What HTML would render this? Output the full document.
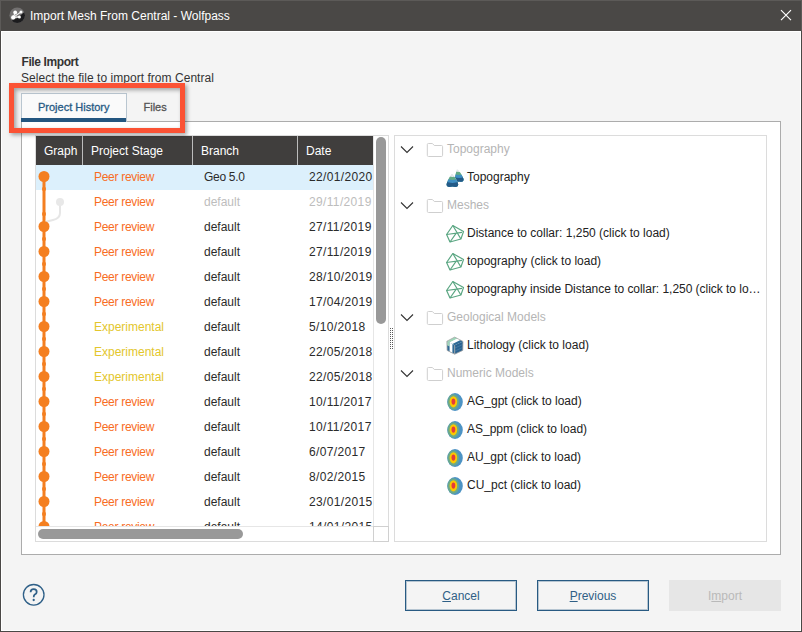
<!DOCTYPE html>
<html><head><meta charset="utf-8">
<style>
*{margin:0;padding:0;box-sizing:border-box}
html,body{width:802px;height:632px;overflow:hidden;background:#4a4846}
body{font-family:"Liberation Sans",sans-serif;font-size:12px;position:relative}
.a{position:absolute}
.t{position:absolute;white-space:nowrap;line-height:14px}
#title{left:0;top:0;width:802px;height:31px;background:#4a4846;border:1px solid #5c5a58;border-bottom:none}
#content{left:1px;top:31px;width:800px;height:600px;background:#f4f4f4;border:1px solid #fff}
.ps{color:#f86d1f;letter-spacing:-0.3px}
.ex{color:#e3c62c}
.df{color:#2b2b2b}
.fd{color:#bdbdbd}
.btn{position:absolute;top:580px;width:112px;height:31px;border:1px solid #285a82;box-shadow:inset 0 0 0 1px rgba(40,90,130,0.3);color:#2f5f86;text-align:center;line-height:30px;font-size:12px}
.tr{position:absolute;white-space:nowrap;line-height:14px;color:#222}
.tg{color:#b5b5b5}
</style></head>
<body>
<div id="title" class="a">
  <svg class="a" style="left:8px;top:6px" width="17" height="17" viewBox="0 0 17 17">
    <defs><clipPath id="ic"><circle cx="8.2" cy="8.15" r="7.75"/></clipPath></defs>
    <circle cx="8.2" cy="8.15" r="7.75" fill="#737171"/>
    <path clip-path="url(#ic)" d="M1 14.5 C 4 12.5, 8 12, 10.5 9.5 C 12.5 7.5, 14 6, 17 4 L17 17 L1 17 Z" fill="#1c1c1e"/>
    <g stroke="#f2f2f2" stroke-width="1.1"><line x1="4.2" y1="10.4" x2="12" y2="5"/><line x1="4.2" y1="10.4" x2="10.4" y2="9.9"/><line x1="4.2" y1="10.4" x2="6.2" y2="5.5"/></g>
    <circle cx="4.2" cy="10.4" r="2.1" fill="#fff"/>
    <circle cx="6.2" cy="5.5" r="1.9" fill="#fff"/>
    <circle cx="12" cy="5" r="1.5" fill="#fff"/>
    <circle cx="10.4" cy="9.9" r="1.5" fill="#fff"/>
  </svg>
  <div class="t" style="left:29px;top:7.5px;color:#fff;font-size:12px">Import Mesh From Central - Wolfpass</div>
  <svg class="a" style="left:779px;top:8px" width="13" height="13" viewBox="0 0 13 13">
    <path d="M1 1.1 L11 11.1 M11 1.1 L1 11.1" stroke="#fff" stroke-width="1.15"/>
  </svg>
</div>
<div id="content" class="a"></div>

<div class="t" style="left:21.5px;top:55px;font-weight:bold;color:#333;letter-spacing:-0.4px">File Import</div>
<div class="t" style="left:21px;top:70.5px;color:#333;letter-spacing:0.04px">Select the file to import from Central</div>

<!-- tab panel -->
<div class="a" style="left:21px;top:121px;width:760px;height:434px;border:1px solid #acacac;background:#fff"></div>
<!-- tabs -->
<div class="a" style="left:21px;top:93px;width:106px;height:29px;background:#fafafa;border:1px solid #b9c6d0;border-bottom:none"></div>
<div class="a" style="left:21px;top:118px;width:105px;height:4px;background:#235680"></div>
<div class="t" style="left:38px;top:100px;color:#275a84;font-size:11px;-webkit-text-stroke:0.3px #275a84">Project History</div>
<div class="t" style="left:143.5px;top:100px;color:#555;font-size:11px;-webkit-text-stroke:0.3px #555;letter-spacing:0px">Files</div>

<!-- left table -->
<div class="a" style="left:35px;top:135px;width:354px;height:407px;border:1px solid #dcdcdc;background:#fff"></div>
<div class="a" style="left:36px;top:136px;width:337px;height:29px;background:#403e3d"></div>
<div class="a" style="left:82px;top:136px;width:1px;height:29px;background:#bcbcbc"></div>
<div class="a" style="left:192px;top:136px;width:1px;height:29px;background:#bcbcbc"></div>
<div class="a" style="left:297px;top:136px;width:1px;height:29px;background:#bcbcbc"></div>
<div class="t" style="left:44px;top:144px;color:#fff">Graph</div>
<div class="t" style="left:91px;top:144px;color:#fff">Project Stage</div>
<div class="t" style="left:201px;top:144px;color:#fff">Branch</div>
<div class="t" style="left:306px;top:144px;color:#fff">Date</div>

<div class="a" style="left:36px;top:165px;width:337px;height:361px;overflow:hidden">
  <div class="a" style="left:0;top:0;width:337px;height:25px;background:#dcf0fc"></div>
<svg class="a" style="left:0;top:0" width="40" height="361" viewBox="0 0 40 361">
<line x1="8" y1="11" x2="8" y2="361" stroke="#f47f20" stroke-width="3"/>
<path d="M24 37 L24 48 Q24 53.5 17 55 L9 57" fill="none" stroke="#e6e6e6" stroke-width="2"/>
<ellipse cx="8" cy="24" rx="2" ry="2.2" fill="#f47f20"/>
<ellipse cx="8" cy="49" rx="2" ry="2.2" fill="#f47f20"/>
<ellipse cx="8" cy="74" rx="2" ry="2.2" fill="#f47f20"/>
<ellipse cx="8" cy="99" rx="2" ry="2.2" fill="#f47f20"/>
<ellipse cx="8" cy="124" rx="2" ry="2.2" fill="#f47f20"/>
<ellipse cx="8" cy="149" rx="2" ry="2.2" fill="#f47f20"/>
<ellipse cx="8" cy="174" rx="2" ry="2.2" fill="#f47f20"/>
<ellipse cx="8" cy="199" rx="2" ry="2.2" fill="#f47f20"/>
<ellipse cx="8" cy="224" rx="2" ry="2.2" fill="#f47f20"/>
<ellipse cx="8" cy="249" rx="2" ry="2.2" fill="#f47f20"/>
<ellipse cx="8" cy="274" rx="2" ry="2.2" fill="#f47f20"/>
<ellipse cx="8" cy="299" rx="2" ry="2.2" fill="#f47f20"/>
<ellipse cx="8" cy="324" rx="2" ry="2.2" fill="#f47f20"/>
<ellipse cx="8" cy="349" rx="2" ry="2.2" fill="#f47f20"/>
<ellipse cx="8" cy="374" rx="2" ry="2.2" fill="#f47f20"/>
<circle cx="24" cy="37" r="4" fill="#e8e8e8"/>
<circle cx="8" cy="11.5" r="5.5" fill="#f47f20"/>
<circle cx="8" cy="61.5" r="5.5" fill="#f47f20"/>
<circle cx="8" cy="86.5" r="5.5" fill="#f47f20"/>
<circle cx="8" cy="111.5" r="5.5" fill="#f47f20"/>
<circle cx="8" cy="136.5" r="5.5" fill="#f47f20"/>
<circle cx="8" cy="161.5" r="5.5" fill="#f47f20"/>
<circle cx="8" cy="186.5" r="5.5" fill="#f47f20"/>
<circle cx="8" cy="211.5" r="5.5" fill="#f47f20"/>
<circle cx="8" cy="236.5" r="5.5" fill="#f47f20"/>
<circle cx="8" cy="261.5" r="5.5" fill="#f47f20"/>
<circle cx="8" cy="286.5" r="5.5" fill="#f47f20"/>
<circle cx="8" cy="311.5" r="5.5" fill="#f47f20"/>
<circle cx="8" cy="336.5" r="5.5" fill="#f47f20"/>
<circle cx="8" cy="361.5" r="5.5" fill="#f47f20"/>
</svg>
<div class="t ps" style="left:58px;top:5px">Peer review</div>
<div class="t df" style="left:168px;top:5px;letter-spacing:-0.3px">Geo 5.0</div>
<div class="t df" style="left:273px;top:5px;letter-spacing:0.35px">22/01/2020</div>
<div class="t ps" style="left:58px;top:30px">Peer review</div>
<div class="t fd" style="left:168px;top:30px">default</div>
<div class="t fd" style="left:273px;top:30px;letter-spacing:0.35px">29/11/2019</div>
<div class="t ps" style="left:58px;top:55px">Peer review</div>
<div class="t df" style="left:168px;top:55px">default</div>
<div class="t df" style="left:273px;top:55px;letter-spacing:0.35px">27/11/2019</div>
<div class="t ps" style="left:58px;top:80px">Peer review</div>
<div class="t df" style="left:168px;top:80px">default</div>
<div class="t df" style="left:273px;top:80px;letter-spacing:0.35px">27/11/2019</div>
<div class="t ps" style="left:58px;top:105px">Peer review</div>
<div class="t df" style="left:168px;top:105px">default</div>
<div class="t df" style="left:273px;top:105px;letter-spacing:0.35px">28/10/2019</div>
<div class="t ps" style="left:58px;top:130px">Peer review</div>
<div class="t df" style="left:168px;top:130px">default</div>
<div class="t df" style="left:273px;top:130px;letter-spacing:0.35px">17/04/2019</div>
<div class="t ex" style="left:58px;top:155px">Experimental</div>
<div class="t df" style="left:168px;top:155px">default</div>
<div class="t df" style="left:273px;top:155px;letter-spacing:0.35px">5/10/2018</div>
<div class="t ex" style="left:58px;top:180px">Experimental</div>
<div class="t df" style="left:168px;top:180px">default</div>
<div class="t df" style="left:273px;top:180px;letter-spacing:0.35px">22/05/2018</div>
<div class="t ex" style="left:58px;top:205px">Experimental</div>
<div class="t df" style="left:168px;top:205px">default</div>
<div class="t df" style="left:273px;top:205px;letter-spacing:0.35px">22/05/2018</div>
<div class="t ps" style="left:58px;top:230px">Peer review</div>
<div class="t df" style="left:168px;top:230px">default</div>
<div class="t df" style="left:273px;top:230px;letter-spacing:0.35px">10/11/2017</div>
<div class="t ps" style="left:58px;top:255px">Peer review</div>
<div class="t df" style="left:168px;top:255px">default</div>
<div class="t df" style="left:273px;top:255px;letter-spacing:0.35px">10/11/2017</div>
<div class="t ps" style="left:58px;top:280px">Peer review</div>
<div class="t df" style="left:168px;top:280px">default</div>
<div class="t df" style="left:273px;top:280px;letter-spacing:0.35px">6/07/2017</div>
<div class="t ps" style="left:58px;top:305px">Peer review</div>
<div class="t df" style="left:168px;top:305px">default</div>
<div class="t df" style="left:273px;top:305px;letter-spacing:0.35px">8/02/2015</div>
<div class="t ps" style="left:58px;top:330px">Peer review</div>
<div class="t df" style="left:168px;top:330px">default</div>
<div class="t df" style="left:273px;top:330px;letter-spacing:0.35px">23/01/2015</div>
<div class="t ps" style="left:58px;top:355px">Peer review</div>
<div class="t df" style="left:168px;top:355px">default</div>
<div class="t df" style="left:273px;top:355px;letter-spacing:0.35px">14/01/2015</div>
</div>
<!-- v scrollbar -->
<div class="a" style="left:373px;top:136px;width:15px;height:390px;background:#fff;border-left:1px solid #e6e6e6"></div>
<div class="a" style="left:376px;top:137px;width:10px;height:187px;background:#999;border-radius:5px"></div>
<!-- h scrollbar -->
<div class="a" style="left:36px;top:526px;width:337px;height:15px;background:#fff;border-top:1px solid #e6e6e6"></div>
<div class="a" style="left:38px;top:529px;width:205px;height:10px;background:#999;border-radius:5px"></div>
<div class="a" style="left:373px;top:526px;width:16px;height:16px;border:1px solid #d0d0d0;background:#fff"></div>

<svg class="a" style="left:389px;top:327px" width="5" height="24" viewBox="0 0 5 24"><g fill="#5a5a5a">
<rect x="1" y="1" width="1" height="1"/><rect x="3" y="1" width="1" height="1"/>
<rect x="1" y="3" width="1" height="1"/><rect x="3" y="3" width="1" height="1"/>
<rect x="1" y="5" width="1" height="1"/><rect x="3" y="5" width="1" height="1"/>
<rect x="1" y="7" width="1" height="1"/><rect x="3" y="7" width="1" height="1"/>
<rect x="1" y="9" width="1" height="1"/><rect x="3" y="9" width="1" height="1"/>
<rect x="1" y="11" width="1" height="1"/><rect x="3" y="11" width="1" height="1"/>
<rect x="1" y="13" width="1" height="1"/><rect x="3" y="13" width="1" height="1"/>
<rect x="1" y="15" width="1" height="1"/><rect x="3" y="15" width="1" height="1"/>
<rect x="1" y="17" width="1" height="1"/><rect x="3" y="17" width="1" height="1"/>
<rect x="1" y="19" width="1" height="1"/><rect x="3" y="19" width="1" height="1"/>
<rect x="1" y="21" width="1" height="1"/><rect x="3" y="21" width="1" height="1"/>
</g></svg>
<!-- right tree panel -->
<div class="a" style="left:394px;top:135px;width:373px;height:407px;border:1px solid #dcdcdc;background:#fff"></div>
<svg class="a" style="left:400px;top:145px" width="14" height="9" viewBox="0 0 14 9"><path d="M1 1.5 L7 7.5 L13 1.5" fill="none" stroke="#333" stroke-width="1.1"/></svg>
<svg class="a" style="left:426px;top:142px" width="18" height="15" viewBox="0 0 18 15"><path d="M1.3 2.6 Q1.3 1.5 2.4 1.5 L6.4 1.5 L8.3 3.5 L15.5 3.5 Q16.6 3.5 16.6 4.6 L16.6 13.3 Q16.6 14.5 15.4 14.5 L2.5 14.5 Q1.3 14.5 1.3 13.3 Z" fill="none" stroke="#cfcfcf" stroke-width="1"/></svg>
<div class="tr tg" style="left:447px;top:142px">Topography</div>
<svg class="a" style="left:440px;top:162px" width="30" height="30" viewBox="0 0 30 30"><clipPath id="c1177"><path d="M16.7 7.4 L17.900000000000002 7.4 Q23.1 14.0 23.6 17.645 Q23.6 20.57 19.1 19.4 Q14.6 20.57 14.6 17.645 Q15.1 14.0 16.7 7.4 Z"/></clipPath><g clip-path="url(#c1177)"><path d="M13.6 30 L24.6 30 L24.6 -6.0 Q19.1 -3.6 13.6 -6.0 Z" fill="#e4e8ea"/><path d="M13.6 30 L24.6 30 L24.6 8.9 Q19.1 11.3 13.6 8.9 Z" fill="#62ab86"/><path d="M13.6 30 L24.6 30 L24.6 11.8 Q19.1 14.200000000000001 13.6 11.8 Z" fill="#3f8fc4"/><path d="M13.6 30 L24.6 30 L24.6 14.8 Q19.1 17.2 13.6 14.8 Z" fill="#245a87"/></g><clipPath id="c2177"><path d="M11.4 12.0 L12.6 12.0 Q17.7 18.93 18.2 22.338 Q18.2 26.108 12.399999999999999 24.6 Q6.6 26.108 6.6 22.338 Q7.1 18.93 11.4 12.0 Z"/></clipPath><g clip-path="url(#c2177)"><path d="M5.6 30 L19.2 30 L19.2 -6.0 Q12.399999999999999 -3.6 5.6 -6.0 Z" fill="#e4e8ea"/><path d="M5.6 30 L19.2 30 L19.2 13.7 Q12.399999999999999 16.099999999999998 5.6 13.7 Z" fill="#62ab86"/><path d="M5.6 30 L19.2 30 L19.2 16.7 Q12.399999999999999 19.099999999999998 5.6 16.7 Z" fill="#3f8fc4"/><path d="M5.6 30 L19.2 30 L19.2 19.7 Q12.399999999999999 22.099999999999998 5.6 19.7 Z" fill="#245a87"/></g></svg>
<div class="tr" style="left:467px;top:170px">Topography</div>
<svg class="a" style="left:400px;top:201px" width="14" height="9" viewBox="0 0 14 9"><path d="M1 1.5 L7 7.5 L13 1.5" fill="none" stroke="#333" stroke-width="1.1"/></svg>
<svg class="a" style="left:426px;top:198px" width="18" height="15" viewBox="0 0 18 15"><path d="M1.3 2.6 Q1.3 1.5 2.4 1.5 L6.4 1.5 L8.3 3.5 L15.5 3.5 Q16.6 3.5 16.6 4.6 L16.6 13.3 Q16.6 14.5 15.4 14.5 L2.5 14.5 Q1.3 14.5 1.3 13.3 Z" fill="none" stroke="#cfcfcf" stroke-width="1"/></svg>
<div class="tr tg" style="left:447px;top:198px">Meshes</div>
<svg class="a" style="left:440px;top:220.4px" width="30" height="30" viewBox="0 0 30 30"><g fill="none" stroke="#5aa682" stroke-width="1.2" stroke-linejoin="round"><path d="M12.8 5.5 L23.5 11.6 L20.9 19 L10 22 L6.6 14.5 Z"/><path d="M12.8 5.5 L20.9 19 M6.6 14.5 L22 12.3 M10 22 L16.4 12.8"/></g></svg>
<div class="tr" style="left:467px;top:226px">Distance to collar: 1,250 (click to load)</div>
<svg class="a" style="left:440px;top:248.4px" width="30" height="30" viewBox="0 0 30 30"><g fill="none" stroke="#5aa682" stroke-width="1.2" stroke-linejoin="round"><path d="M12.8 5.5 L23.5 11.6 L20.9 19 L10 22 L6.6 14.5 Z"/><path d="M12.8 5.5 L20.9 19 M6.6 14.5 L22 12.3 M10 22 L16.4 12.8"/></g></svg>
<div class="tr" style="left:467px;top:254px">topography (click to load)</div>
<svg class="a" style="left:440px;top:276.4px" width="30" height="30" viewBox="0 0 30 30"><g fill="none" stroke="#5aa682" stroke-width="1.2" stroke-linejoin="round"><path d="M12.8 5.5 L23.5 11.6 L20.9 19 L10 22 L6.6 14.5 Z"/><path d="M12.8 5.5 L20.9 19 M6.6 14.5 L22 12.3 M10 22 L16.4 12.8"/></g></svg>
<div class="tr" style="left:467px;top:282px;letter-spacing:-0.035px">topography inside Distance to collar: 1,250 (click to lo…</div>
<svg class="a" style="left:400px;top:313px" width="14" height="9" viewBox="0 0 14 9"><path d="M1 1.5 L7 7.5 L13 1.5" fill="none" stroke="#333" stroke-width="1.1"/></svg>
<svg class="a" style="left:426px;top:310px" width="18" height="15" viewBox="0 0 18 15"><path d="M1.3 2.6 Q1.3 1.5 2.4 1.5 L6.4 1.5 L8.3 3.5 L15.5 3.5 Q16.6 3.5 16.6 4.6 L16.6 13.3 Q16.6 14.5 15.4 14.5 L2.5 14.5 Q1.3 14.5 1.3 13.3 Z" fill="none" stroke="#cfcfcf" stroke-width="1"/></svg>
<div class="tr tg" style="left:447px;top:310px">Geological Models</div>
<svg class="a" style="left:440px;top:330px" width="30" height="30" viewBox="0 0 30 30"><path d="M14.7 7.1 L6.9 11.2 L9.6 12.6 L17.6 8.6 Z" fill="#9fd6ba"/><path d="M9.6 12.6 L17.6 8.6 L20.5 10.1 L12.4 14 Z" fill="#ffffff"/><path d="M12.4 14 L20.5 10.1 L23 11.4 L14.7 15.2 Z" fill="#2f6a96"/><path d="M6.9 11.2 L14.7 15.2 L14.7 24.2 L7.1 20.4 Z" fill="#2f6a96"/><path d="M6.9 11.2 L9.6 12.6 L9.6 16.6 L6.95 15.3 Z" fill="#9fd6ba"/><path d="M9.6 12.6 L12.4 14 L12.4 23 L9.6 21.6 Z" fill="#ffffff"/><path d="M14.7 15.2 L23 11.4 L22.8 20.4 L14.7 24.2 Z" fill="#2a628f"/><path d="M15 18 L22.9 14.4 M15 21 L22.85 17.4" stroke="#4a80aa" stroke-width="0.7"/><path d="M14.7 7.1 L23 11.4 L22.8 20.4 L14.7 24.2 L7.1 20.4 L6.9 11.2 Z M14.7 15.2 L14.7 24.2" fill="none" stroke="#a8a8a8" stroke-width="0.8"/></svg>
<div class="tr" style="left:467px;top:338px">Lithology (click to load)</div>
<svg class="a" style="left:400px;top:369px" width="14" height="9" viewBox="0 0 14 9"><path d="M1 1.5 L7 7.5 L13 1.5" fill="none" stroke="#333" stroke-width="1.1"/></svg>
<svg class="a" style="left:426px;top:366px" width="18" height="15" viewBox="0 0 18 15"><path d="M1.3 2.6 Q1.3 1.5 2.4 1.5 L6.4 1.5 L8.3 3.5 L15.5 3.5 Q16.6 3.5 16.6 4.6 L16.6 13.3 Q16.6 14.5 15.4 14.5 L2.5 14.5 Q1.3 14.5 1.3 13.3 Z" fill="none" stroke="#cfcfcf" stroke-width="1"/></svg>
<div class="tr tg" style="left:447px;top:366px">Numeric Models</div>
<svg class="a" style="left:440px;top:385px" width="30" height="30" viewBox="0 0 30 30"><ellipse cx="15" cy="17" rx="7.8" ry="9" fill="#4d93c4"/><ellipse cx="13.4" cy="17" rx="5.8" ry="7.8" fill="#6aa98a"/><ellipse cx="13.4" cy="16.8" rx="3.8" ry="5.6" fill="#fcc800"/><ellipse cx="13.4" cy="16.6" rx="1.9" ry="3.1" fill="#e53b3a"/></svg>
<div class="tr" style="left:467px;top:394px">AG_gpt (click to load)</div>
<svg class="a" style="left:440px;top:413px" width="30" height="30" viewBox="0 0 30 30"><ellipse cx="15" cy="17" rx="7.8" ry="9" fill="#4d93c4"/><ellipse cx="13.4" cy="17" rx="5.8" ry="7.8" fill="#6aa98a"/><ellipse cx="13.4" cy="16.8" rx="3.8" ry="5.6" fill="#fcc800"/><ellipse cx="13.4" cy="16.6" rx="1.9" ry="3.1" fill="#e53b3a"/></svg>
<div class="tr" style="left:467px;top:422px">AS_ppm (click to load)</div>
<svg class="a" style="left:440px;top:441px" width="30" height="30" viewBox="0 0 30 30"><ellipse cx="15" cy="17" rx="7.8" ry="9" fill="#4d93c4"/><ellipse cx="13.4" cy="17" rx="5.8" ry="7.8" fill="#6aa98a"/><ellipse cx="13.4" cy="16.8" rx="3.8" ry="5.6" fill="#fcc800"/><ellipse cx="13.4" cy="16.6" rx="1.9" ry="3.1" fill="#e53b3a"/></svg>
<div class="tr" style="left:467px;top:450px">AU_gpt (click to load)</div>
<svg class="a" style="left:440px;top:469px" width="30" height="30" viewBox="0 0 30 30"><ellipse cx="15" cy="17" rx="7.8" ry="9" fill="#4d93c4"/><ellipse cx="13.4" cy="17" rx="5.8" ry="7.8" fill="#6aa98a"/><ellipse cx="13.4" cy="16.8" rx="3.8" ry="5.6" fill="#fcc800"/><ellipse cx="13.4" cy="16.6" rx="1.9" ry="3.1" fill="#e53b3a"/></svg>
<div class="tr" style="left:467px;top:478px">CU_pct (click to load)</div>

<!-- red highlight -->
<div class="a" style="left:9px;top:83px;width:176px;height:50px;border:5px solid #fb5234;box-shadow:2px 2px 4px rgba(0,0,0,0.35), inset 2px 2px 4px rgba(0,0,0,0.35)"></div>

<!-- help -->
<svg class="a" style="left:22px;top:583px" width="24" height="24" viewBox="0 0 24 24">
  <circle cx="11.7" cy="11.8" r="10.3" fill="none" stroke="#2f6088" stroke-width="1.3"/>
  <path d="M8.6 9.2 Q8.6 6.2 11.7 6.2 Q14.7 6.2 14.7 8.9 Q14.7 10.6 12.8 11.6 Q11.7 12.3 11.7 14.3" fill="none" stroke="#2f6088" stroke-width="1.75"/>
  <circle cx="11.7" cy="17" r="1.15" fill="#2f6088"/>
</svg>

<div class="btn" style="left:405px"><u>C</u>ancel</div>
<div class="btn" style="left:537px"><u>P</u>revious</div>
<div class="btn" style="left:669px;border-color:#e6e6e6;background:#e6e6e6;color:#b9b9b9;box-shadow:none">I<u>m</u>port</div>
</body></html>
